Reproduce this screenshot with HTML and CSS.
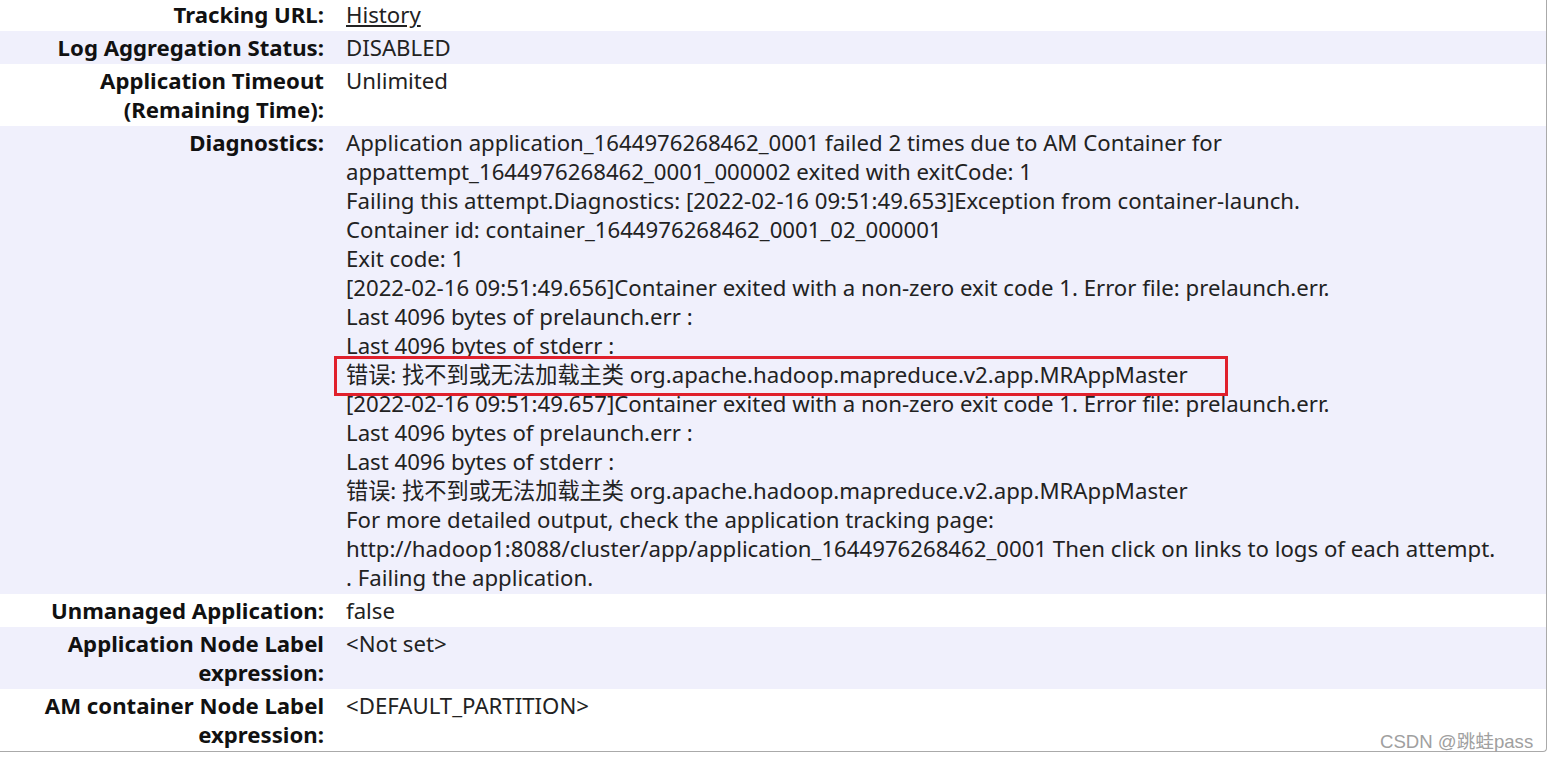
FILE: index.html
```html
<!DOCTYPE html>
<html lang="en">
<head>
<meta charset="UTF-8">
<title>Application Overview</title>
<link rel="stylesheet" href="styles.css">
</head>
<body>

<div class="info-wrap">
  <div class="info-row">
    <div class="label">Tracking URL:</div>
    <div class="value"><a href="#">History</a></div>
  </div>
  <div class="info-row odd">
    <div class="label">Log Aggregation Status:</div>
    <div class="value">DISABLED</div>
  </div>
  <div class="info-row">
    <div class="label">Application Timeout<br>(Remaining Time):</div>
    <div class="value">Unlimited</div>
  </div>
  <div class="info-row odd">
    <div class="label">Diagnostics:</div>
    <div class="value diag">
      Application application_1644976268462_0001 failed 2 times due to AM Container for<br>
      appattempt_1644976268462_0001_000002 exited with exitCode: 1<br>
      Failing this attempt.Diagnostics: [2022-02-16 09:51:49.653]Exception from container-launch.<br>
      Container id: container_1644976268462_0001_02_000001<br>
      Exit code: 1<br>
      [2022-02-16 09:51:49.656]Container exited with a non-zero exit code 1. Error file: prelaunch.err.<br>
      Last 4096 bytes of prelaunch.err :<br>
      Last 4096 bytes of stderr :<br>
      <span class="marked">错误: 找不到或无法加载主类 org.apache.hadoop.mapreduce.v2.app.MRAppMaster</span><br>
      [2022-02-16 09:51:49.657]Container exited with a non-zero exit code 1. Error file: prelaunch.err.<br>
      Last 4096 bytes of prelaunch.err :<br>
      Last 4096 bytes of stderr :<br>
      错误: 找不到或无法加载主类 org.apache.hadoop.mapreduce.v2.app.MRAppMaster<br>
      For more detailed output, check the application tracking page:<br>
      http://hadoop1:8088/cluster/app/application_1644976268462_0001 Then click on links to logs of each attempt.<br>
      . Failing the application.
    </div>
  </div>
  <div class="info-row">
    <div class="label">Unmanaged Application:</div>
    <div class="value">false</div>
  </div>
  <div class="info-row odd">
    <div class="label">Application Node Label<br>expression:</div>
    <div class="value">&lt;Not set&gt;</div>
  </div>
  <div class="info-row">
    <div class="label">AM container Node Label<br>expression:</div>
    <div class="value">&lt;DEFAULT_PARTITION&gt;</div>
  </div>
</div>

<div class="watermark">CSDN @跳蛙pass</div>

</body>
</html>
```

FILE: styles.css
```css
/* Global Styles */
body {
  font-family: "Noto Sans", "Noto Sans CJK SC", sans-serif;
  font-size: 22.2px;
  line-height: 29px;
  color: #222;
  background-color: #fff;
  margin: 0;
  padding: 0;
  overflow: hidden;
}
.info-wrap {
  width: 1546px;
  margin-top: -2px;
  border-right: 1px solid #aaa;
  border-bottom: 1px solid #aaa;
  border-bottom-right-radius: 4px;
}
.info-row {
  display: grid;
  grid-template-columns: 324px 1fr;
  column-gap: 22px;
  padding: 2px 0;
}
.info-row.odd {
  background-color: #f0f0fc;
}
.label {
  text-align: right;
  font-weight: bold;
  color: #111;
}
.value {
  white-space: nowrap;
}
.value a {
  color: #222;
}
.marked {
  position: relative;
}
.marked::after {
  content: "";
  position: absolute;
  left: -12px;
  top: -3px;
  width: 888px;
  height: 34px;
  border: 3px solid #e0202c;
}
.watermark {
  position: absolute;
  left: 1380px;
  top: 727px;
  font-family: "Liberation Sans", "Noto Sans CJK SC", sans-serif;
  font-size: 18.6px;
  color: #a0a0a0;
}
```
